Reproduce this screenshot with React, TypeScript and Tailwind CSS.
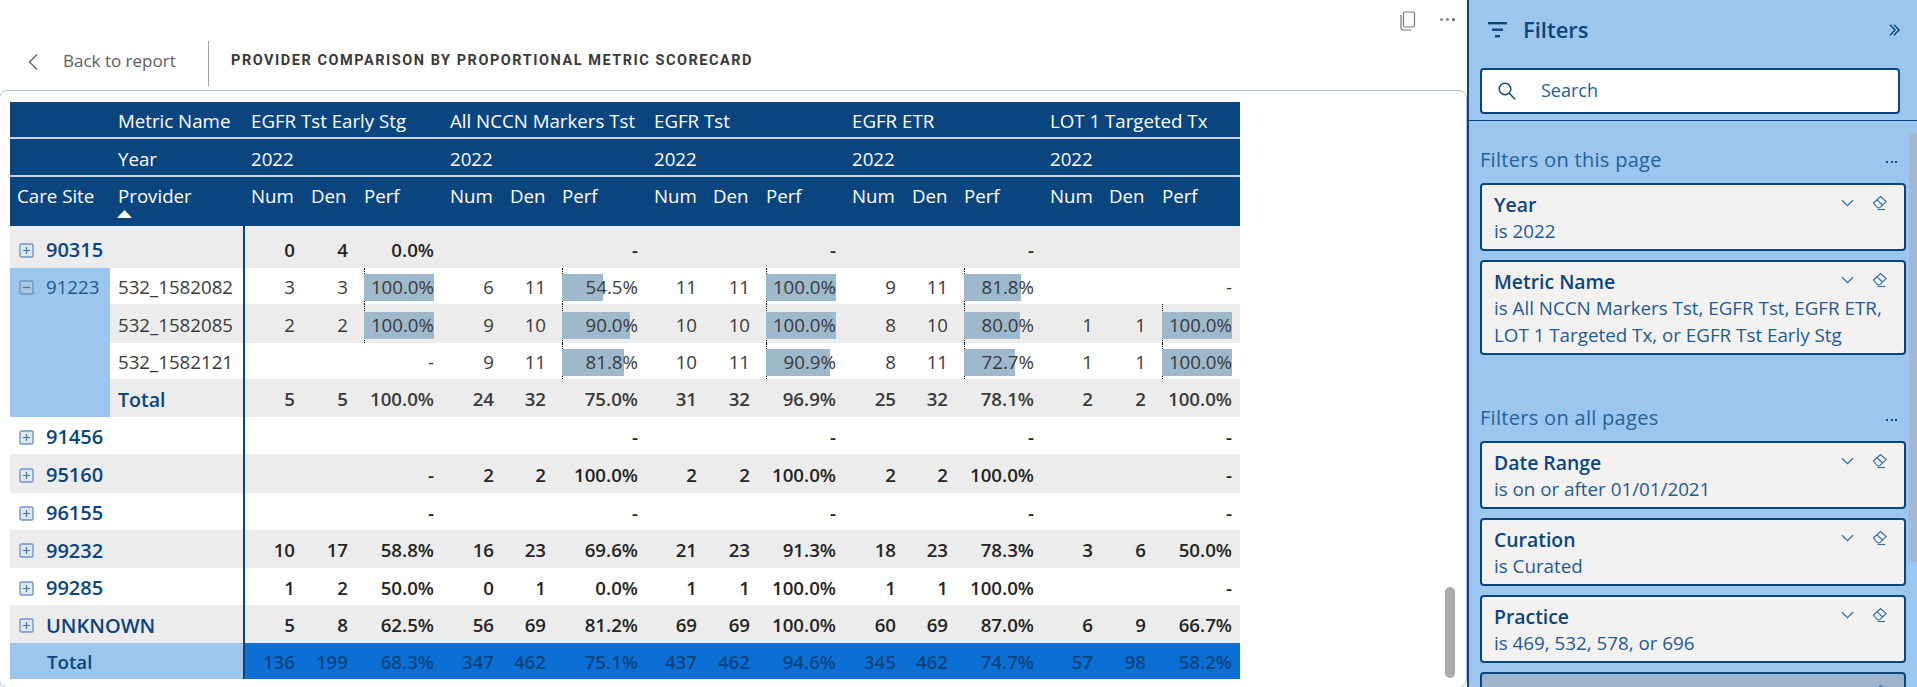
import React from "react";

const full = "grid grid-cols-[100px_133px_60px_53px_86px_60px_52px_92px_59px_53px_86px_60px_52px_86px_59px_53px_86px]";
const sub = "grid grid-cols-[133px_60px_53px_86px_60px_52px_92px_59px_53px_86px_60px_52px_86px_59px_53px_86px]";
const groups = ["EGFR Tst Early Stg", "All NCCN Markers Tst", "EGFR Tst", "EGFR ETR", "LOT 1 Targeted Tx"];

type Triple = [string, string, string];
const E: Triple = ["", "", ""];
const D: Triple = ["", "", "-"];

function TreeBox({ minus, faded }: { minus?: boolean; faded?: boolean }) {
  return (
    <svg width="15" height="15" viewBox="0 0 15 15" className="shrink-0">
      <rect x="1" y="1" width="13" height="13" rx="1.5" fill={faded ? "#a9c8e6" : "#dfe6ee"} stroke="#6f98c0" strokeWidth="1.4" />
      <path d={minus ? "M4 7.5h7" : "M4 7.5h7M7.5 4v7"} stroke="#3f78ad" strokeWidth="1.2" />
    </svg>
  );
}

function Eraser() {
  return (
    <svg width="16" height="16" viewBox="0 0 16 16" fill="none" stroke="#2f6aa3" strokeWidth="1.1" className="shrink-0">
      <path d="M1.5 8 8.5 1.5 14.2 6.5 7.7 12.8 5.5 12.8Z" />
      <path d="M5 4.8 10.5 10" />
      <path d="M5.5 14.5h7.5" />
    </svg>
  );
}

function Chevron() {
  return (
    <svg width="13" height="8" viewBox="0 0 13 8" fill="none" stroke="#2f6aa3" strokeWidth="1.2" className="shrink-0">
      <path d="M1 1.2 6.5 6.6 12 1.2" />
    </svg>
  );
}

function Cell({ v, bold, first, pad = "pt-[3px]" }: { v: string; bold?: boolean; first?: boolean; pad?: string }) {
  return (
    <div className={`flex items-center justify-end pr-2 ${pad} ${bold ? "font-semibold" : ""} ${first ? "border-l-2 border-[#0a4580]" : ""}`}>
      {v}
    </div>
  );
}

function Bar({ v }: { v: string }) {
  const pct = parseFloat(v);
  return (
    <div className="relative flex items-center px-2 pt-[3px]">
      <div className="absolute left-2 top-0 bottom-0 border-l border-dotted border-black" />
      <div className="relative flex h-[27px] w-full items-center justify-end">
        <div className="absolute inset-y-0 left-0 bg-[#9fb9cc]" style={{ width: `${pct}%` }} />
        <span className="relative">{v}</span>
      </div>
    </div>
  );
}

function Vals({ data, bold, barred, pad }: { data: Triple[]; bold?: boolean; barred?: boolean; pad?: string }) {
  return (
    <>
      {data.map((t, i) => (
        <React.Fragment key={i}>
          <Cell v={t[0]} bold={bold} first={i === 0} pad={pad} />
          <Cell v={t[1]} bold={bold} pad={pad} />
          {barred && t[2].includes("%") ? <Bar v={t[2]} /> : <Cell v={t[2]} bold={bold} pad={pad} />}
        </React.Fragment>
      ))}
    </>
  );
}

function TopRow({ label, data, h, gray }: { label: string; data: Triple[]; h: string; gray?: boolean }) {
  return (
    <div className={`${full} ${h} ${gray ? "bg-[#ececec]" : "bg-white"} text-[#252423]`}>
      <div className="col-span-2 flex items-center gap-[12px] pl-[9px] pt-[3px] text-[20px] font-semibold text-[#0a4580]">
        <TreeBox />
        <span>{label}</span>
      </div>
      <Vals data={data} bold />
    </div>
  );
}

function SubRow({ label, data, h, gray, bold }: { label: string; data: Triple[]; h: string; gray?: boolean; bold?: boolean }) {
  return (
    <div className={`${sub} ${h} ${gray ? "bg-[#ececec]" : "bg-white"} text-[#3b3a39]`}>
      <div className={`flex items-center pl-2 pt-[3px] ${bold ? "text-[19.5px] font-semibold text-[#0a4580]" : ""}`}>{label}</div>
      <Vals data={data} bold={bold} barred={!bold} />
    </div>
  );
}

function FilterCard({ title, lines, h, off }: { title: string; lines: string[]; h: string; off?: boolean }) {
  return (
    <div className={`flex ${h} shrink-0 rounded-[4px] border-2 border-[#0a4580] ${off ? "bg-[#9fb3cc]" : "bg-[#f3f2f1]"} pl-3 pr-[16px] pt-[6px]`}>
      <div className="min-w-0 flex-1 text-[18.8px] leading-[27px] text-[#0a4580]">
        <div className="text-[19.4px] font-semibold">{title}</div>
        {lines.map((l) => (
          <div key={l} className="whitespace-nowrap text-[#1e5b94]">{l}</div>
        ))}
      </div>
      <div className="flex h-[20px] shrink-0 items-center gap-[18px] pt-[4px]">
        <Chevron />
        <Eraser />
      </div>
    </div>
  );
}

function SectionLabel({ text, cls }: { text: string; cls: string }) {
  return (
    <div className={`flex h-[26px] items-center justify-between pr-[9px] ${cls} text-[20px] tracking-[0.3px] text-[#22629c]`}>
      <span>{text}</span>
      <span className="flex gap-[2.5px] pt-[4px]">
        <i className="block h-[2px] w-[2px] bg-[#0a4580]" />
        <i className="block h-[2px] w-[2px] bg-[#0a4580]" />
        <i className="block h-[2px] w-[2px] bg-[#0a4580]" />
      </span>
    </div>
  );
}

export default function App() {
  return (
    <div className="flex h-[687px] w-[1917px] overflow-hidden bg-white font-['Open_Sans',sans-serif]">
      {/* Report area */}
      <div className="flex h-full w-[1467px] flex-col">
        <div className="relative flex h-[90px] shrink-0 items-start">
          <div className="mt-[41px] flex h-[45px] items-center">
            <svg width="12" height="18" viewBox="0 0 12 18" fill="none" stroke="#605e5c" strokeWidth="1.3" className="ml-[27px] mt-[-4px]">
              <path d="M10 1.5 2.5 9l7.5 7.5" />
            </svg>
            <span className="ml-[24px] mt-[-6px] w-[145px] text-[17px] text-[#605e5c]">Back to report</span>
            <div className="h-[45px] w-px bg-[#a19f9d]" />
            <span className="ml-[22px] mt-[-5px] whitespace-nowrap font-['Roboto',sans-serif] text-[14.5px] font-bold tracking-[1.53px] text-[#3b3a39]">
              PROVIDER COMPARISON BY PROPORTIONAL METRIC SCORECARD
            </span>
          </div>
          <div className="absolute right-[12px] top-[11px] flex items-start gap-[24px]">
            <svg width="17" height="20" viewBox="0 0 17 20" fill="none" stroke="#7a7876" strokeWidth="1.2">
              <rect x="4.5" y="1" width="11" height="15" rx="1.5" />
              <path d="M2 4v12.5A2.5 2.5 0 0 0 4.5 19h8" />
            </svg>
            <span className="mt-[7px] flex gap-[3px]">
              <i className="block h-[3px] w-[3px] rounded-full bg-[#8a8886]" />
              <i className="block h-[3px] w-[3px] rounded-full bg-[#8a8886]" />
              <i className="block h-[3px] w-[3px] rounded-full bg-[#605e5c]" />
            </span>
          </div>
        </div>

        <div className="relative -mb-px -ml-px flex-1 rounded-[8px] border border-[#a8c4dc] pl-[10px] pt-[11px] text-[18.7px]">
          {/* Header */}
          <div className="w-[1230px] bg-[#0a4580] text-white">
            <div className={`${full} h-[35px] items-center pt-[3px]`}>
              <div />
              <div className="pl-2">Metric Name</div>
              {groups.map((g) => (
                <div key={g} className="col-span-3 whitespace-nowrap pl-2">{g}</div>
              ))}
            </div>
            <div className="h-[2px] bg-[#c9d3df]" />
            <div className={`${full} h-[36px] items-center pt-[5px]`}>
              <div />
              <div className="pl-2">Year</div>
              {groups.map((g) => (
                <div key={g} className="col-span-3 pl-2">2022</div>
              ))}
            </div>
            <div className="h-[2px] bg-[#c9d3df]" />
            <div className={`${full} h-[49px]`}>
              <div className="pl-[7px] pt-[5px]">Care Site</div>
              <div className="relative pl-2 pt-[5px]">
                Provider
                <svg width="15" height="8" viewBox="0 0 15 8" className="absolute left-[7px] top-[33px]">
                  <path d="M7.5 0 15 8H0Z" fill="#fff" />
                </svg>
              </div>
              {groups.map((g) => (
                <React.Fragment key={g}>
                  <div className="pl-2 pt-[5px]">Num</div>
                  <div className="pl-2 pt-[5px]">Den</div>
                  <div className="pl-2 pt-[5px]">Perf</div>
                </React.Fragment>
              ))}
            </div>
          </div>
          <div className="h-[3px] w-[1230px] bg-[#f1f1f1] pl-[233px]">
            <div className="h-full border-l-2 border-[#0a4580]" />
          </div>

          {/* Body */}
          <div className="w-[1230px]">
            <TopRow label="90315" h="h-[39px]" gray data={[["0", "4", "0.0%"], D, D, D, E]} />
            <div className="flex">
              <div className="flex h-[149px] w-[100px] shrink-0 gap-[12px] bg-[#9dc6ef] pl-[9px] text-[#17598f]">
                <div className="flex h-[36px] items-center pt-[3px]"><TreeBox minus faded /></div>
                <div className="flex h-[36px] items-center pt-[3px]">91223</div>
              </div>
              <div className="flex-1">
                <SubRow label="532_1582082" h="h-[36px]" data={[["3", "3", "100.0%"], ["6", "11", "54.5%"], ["11", "11", "100.0%"], ["9", "11", "81.8%"], D]} />
                <SubRow label="532_1582085" h="h-[39px]" gray data={[["2", "2", "100.0%"], ["9", "10", "90.0%"], ["10", "10", "100.0%"], ["8", "10", "80.0%"], ["1", "1", "100.0%"]]} />
                <SubRow label="532_1582121" h="h-[36px]" data={[D, ["9", "11", "81.8%"], ["10", "11", "90.9%"], ["8", "11", "72.7%"], ["1", "1", "100.0%"]]} />
                <SubRow label="Total" h="h-[38px]" gray bold data={[["5", "5", "100.0%"], ["24", "32", "75.0%"], ["31", "32", "96.9%"], ["25", "32", "78.1%"], ["2", "2", "100.0%"]]} />
              </div>
            </div>
            <TopRow label="91456" h="h-[37px]" data={[E, D, D, D, D]} />
            <TopRow label="95160" h="h-[39px]" gray data={[D, ["2", "2", "100.0%"], ["2", "2", "100.0%"], ["2", "2", "100.0%"], D]} />
            <TopRow label="96155" h="h-[37px]" data={[D, D, D, D, D]} />
            <TopRow label="99232" h="h-[38px]" gray data={[["10", "17", "58.8%"], ["16", "23", "69.6%"], ["21", "23", "91.3%"], ["18", "23", "78.3%"], ["3", "6", "50.0%"]]} />
            <TopRow label="99285" h="h-[37px]" data={[["1", "2", "50.0%"], ["0", "1", "0.0%"], ["1", "1", "100.0%"], ["1", "1", "100.0%"], D]} />
            <TopRow label="UNKNOWN" h="h-[38px]" gray data={[["5", "8", "62.5%"], ["56", "69", "81.2%"], ["69", "69", "100.0%"], ["60", "69", "87.0%"], ["6", "9", "66.7%"]]} />
            <div className={`${full} h-[36px] bg-[#0b6fd6] font-semibold text-[#0a4580]`}>
              <div className="col-span-2 flex items-center bg-[#9dc6ef] pl-[37px] pt-[3px]">Total</div>
              <Vals bold pad="pt-[3px]" data={[["136", "199", "68.3%"], ["347", "462", "75.1%"], ["437", "462", "94.6%"], ["345", "462", "74.7%"], ["57", "98", "58.2%"]]} />
            </div>
          </div>

          {/* Report scrollbar */}
          <div className="absolute right-[11px] top-[496px] h-[91px] w-[10px] rounded-[5px] bg-[#ababab]" />
        </div>
      </div>

      {/* Filter pane */}
      <aside className="flex h-full w-[450px] flex-col border-l-2 border-[#0a4580] bg-[#9dc6ef] text-[#0a4580]">
        <div className="flex h-[68px] shrink-0 items-center pl-[19px] pr-[17px]">
          <svg width="20" height="16" viewBox="0 0 20 16" className="mb-[8px]" fill="#0a4580">
            <rect x="0" y="0" width="19" height="2.4" />
            <rect x="4" y="6.5" width="11" height="2.4" />
            <rect x="7" y="13" width="5" height="2.4" />
          </svg>
          <span className="mb-[10px] ml-[15px] flex-1 text-[22px] font-semibold">Filters</span>
          <svg width="11" height="12" viewBox="0 0 11 12" fill="none" stroke="#0a4580" strokeWidth="1.4" className="mb-[8px]">
            <path d="M1 .7 6 6 1 11.3M5 .7 10 6 5 11.3" />
          </svg>
        </div>
        <div className="ml-[11px] flex h-[46px] w-[420px] shrink-0 items-center rounded-[4px] border-2 border-[#0a4580] bg-white pl-[16px]">
          <svg width="18" height="18" viewBox="0 0 18 18" fill="none" stroke="#0a4580" strokeWidth="1.4">
            <circle cx="7" cy="7" r="5.8" />
            <path d="m11.2 11.2 6 6" />
          </svg>
          <span className="mb-[2px] ml-[25px] text-[18px] text-[#22629c]">Search</span>
        </div>
        <div className="mt-[6px] h-px shrink-0 bg-[#0a4580]" />
        <div className="flex min-h-0 flex-1 overflow-hidden">
          <div className="flex min-w-0 flex-1 flex-col pl-[11px] pr-[3px]">
            <SectionLabel text="Filters on this page" cls="mt-[26px] mb-[10px]" />
            <div className="flex flex-col gap-[9px]">
              <FilterCard title="Year" lines={["is 2022"]} h="h-[68px]" />
              <FilterCard
                title="Metric Name"
                lines={["is All NCCN Markers Tst, EGFR Tst, EGFR ETR,", "LOT 1 Targeted Tx, or EGFR Tst Early Stg"]}
                h="h-[95px]"
              />
            </div>
            <SectionLabel text="Filters on all pages" cls="mt-[50px] mb-[10px]" />
            <div className="flex flex-col gap-[9px]">
              <FilterCard title="Date Range" lines={["is on or after 01/01/2021"]} h="h-[68px]" />
              <FilterCard title="Curation" lines={["is Curated"]} h="h-[68px]" />
              <FilterCard title="Practice" lines={["is 469, 532, 578, or 696"]} h="h-[68px]" />
              <FilterCard title="" lines={[]} h="h-[68px]" off />
            </div>
          </div>
          <div className="mt-[12px] h-[429px] w-[8px] shrink-0 rounded-t-[4px] bg-[#a6b8cf]" />
        </div>
      </aside>
    </div>
  );
}
